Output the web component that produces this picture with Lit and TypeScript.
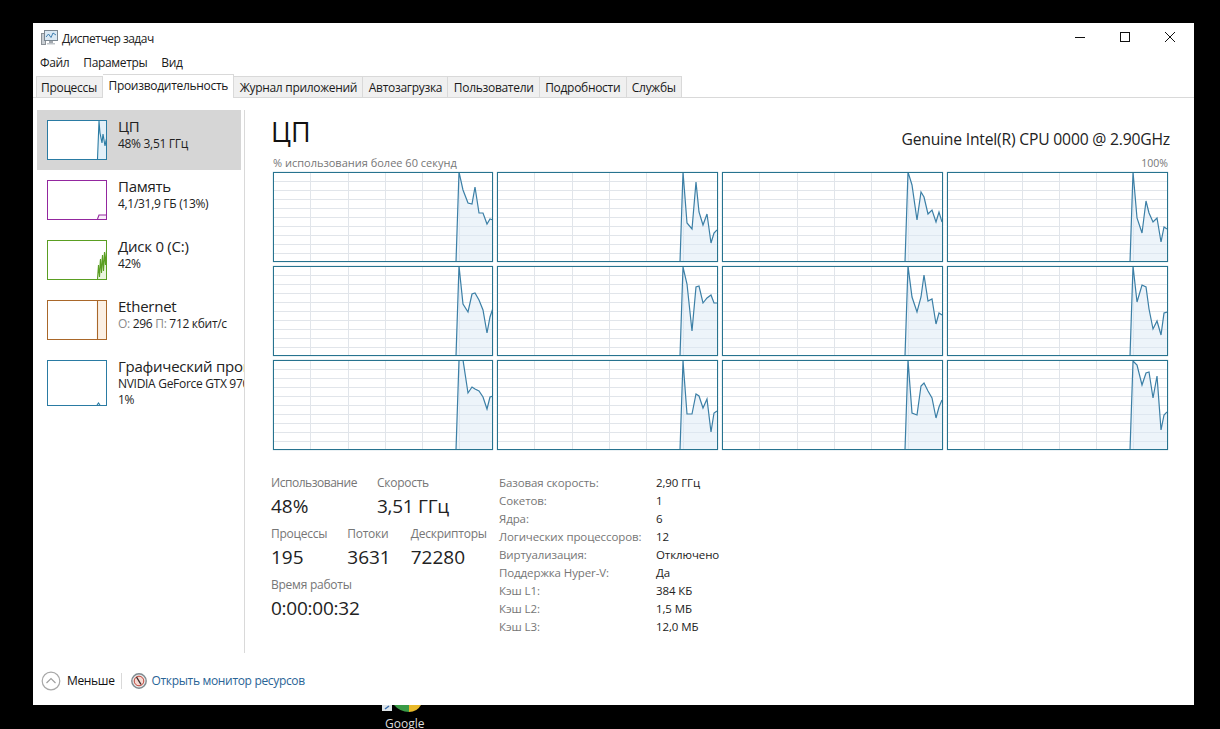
import { LitElement, html, css, svg } from "lit";
import { customElement } from "lit/decorators.js";

type Pt = [number, number];
const XS = [183, 186, 190, 195, 199, 202, 206, 210, 214, 217, 220];
const CHARTS: number[][] = [
  [90, 0, 18, 31, 32, 15, 41, 41, 52, 47, 48],
  [90, 0, 51, 57, 10, 40, 53, 42, 71, 61, 58],
  [90, 0, 13, 48, 20, 25, 42, 38, 50, 40, 50],
  [90, 0, 46, 61, 29, 41, 50, 46, 70, 55, 57],
  [90, 0, 38, 46, 28, 27, 34, 44, 67, 51, 42],
  [90, 1, 18, 65, 21, 20, 37, 32, 29, 37, 37],
  [90, 0, 31, 46, 31, 9, 35, 33, 58, 47, 49],
  [90, 0, 36, 19, 21, 43, 63, 55, 69, 47, 46],
  [90, 0, 0, 33, 27, 29, 31, 37, 49, 37, 36],
  [90, 1, 54, 54, 34, 36, 48, 39, 72, 53, 51],
  [90, 0, 53, 55, 26, 23, 31, 38, 58, 47, 40],
  [90, 1, 5, 25, 13, 12, 38, 16, 70, 55, 52],
];
const H_LINES = [9, 18, 27, 36, 45, 54, 63, 72, 81];
const V_LINES = [37, 75, 112, 149, 186];

const pts = (p: Pt[]) => p.map((q) => q.join(",")).join(" ");

function coreChart(ys: number[]) {
  const line: Pt[] = ys.map((y, i) => [XS[i], y]);
  const area: Pt[] = [...line, [220, 90]];
  return svg`<svg class="core-svg" viewBox="1 1 218.75 88" preserveAspectRatio="none">
    ${V_LINES.map((x) => svg`<line x1=${x + 0.5} x2=${x + 0.5} y1="0" y2="90" stroke="#e1e5ea"/>`)}
    ${H_LINES.map((y) => svg`<line x1="0" x2="220" y1=${y + 0.5} y2=${y + 0.5} stroke="#e1e5ea"/>`)}
    <polygon points=${pts(area)} fill="#dce9f5" fill-opacity="0.5"/>
    <polyline points=${pts(line)} fill="none" stroke="#3b7fa6" stroke-width="1.2"/>
  </svg>`;
}

interface Item {
  name: string;
  sub: unknown;
  third?: string;
  kind: string;
  stroke: string;
  fill: string;
  line?: Pt[];
  area?: Pt[];
}

const ITEMS: Item[] = [
  {
    name: "ЦП", sub: "48%  3,51 ГГц", kind: "cpu", stroke: "#2a7ba3", fill: "#e3f0f8",
    area: [[49.5, 38], [51, 0], [60, 0], [60, 38]],
    line: [[49.5, 38], [51, 0], [52, 12], [54, 22], [55, 13], [57, 25], [58, 20], [60, 26]],
  },
  {
    name: "Память", sub: "4,1/31,9 ГБ (13%)", kind: "mem", stroke: "#93279f", fill: "#f8f0f9",
    area: [[49.5, 38], [51, 34], [60, 34], [60, 38]],
    line: [[49.5, 38], [51, 34], [60, 34]],
  },
  {
    name: "Диск 0 (C:)", sub: "42%", kind: "disk", stroke: "#5a9e22", fill: "#eaf5df",
    area: [[49.5, 38], [51, 20], [54, 16], [56, 13], [58, 12], [60, 11], [60, 38]],
    line: [[49.5, 38], [50.5, 24], [51.5, 36], [52.5, 18], [53.5, 32], [54.5, 14], [55.5, 30], [56.5, 11], [57.5, 24], [58.5, 9], [59, 20], [60, 12]],
  },
  {
    name: "Ethernet",
    sub: html`<span class="dim">О:</span> 296 <span class="dim">П:</span> 712 кбит/с`,
    kind: "net", stroke: "#a9672a", fill: "#fbf0e4",
    area: [[49.5, 0], [60, 0], [60, 38], [49.5, 38]],
    line: [[49.5, 0], [49.5, 38]],
  },
  {
    name: "Графический процессор 0", sub: "NVIDIA GeForce GTX 970", third: "1%", kind: "gpu", stroke: "#2a7ba3", fill: "#e3f0f8",
    area: [[49, 44], [50.5, 42], [52, 44]],
    line: [[49, 44], [50.5, 42], [52, 44]],
  },
];

const TABS = ["Процессы", "Производительность", "Журнал приложений", "Автозагрузка", "Пользователи", "Подробности", "Службы"];
const INFO: [string, string][] = [
  ["Базовая скорость:", "2,90 ГГц"],
  ["Сокетов:", "1"],
  ["Ядра:", "6"],
  ["Логических процессоров:", "12"],
  ["Виртуализация:", "Отключено"],
  ["Поддержка Hyper-V:", "Да"],
  ["Кэш L1:", "384 КБ"],
  ["Кэш L2:", "1,5 МБ"],
  ["Кэш L3:", "12,0 МБ"],
];

@customElement("app-root")
export class AppRoot extends LitElement {
  static styles = css`
    :host {
      display: block;
      width: 1220px;
      height: 729px;
      overflow: hidden;
      background: #000;
      font-family: "Open Sans", "Noto Sans", sans-serif;
      color: #1a1a1a;
      font-size: 12px;
      letter-spacing: -0.25px;
    }
    .stage { padding: 23px 26px 0 33px; }
    .window {
      height: 682px;
      background: #fff;
      display: flex;
      flex-direction: column;
    }
    .title {
      height: 27px;
      display: flex;
      align-items: center;
      padding: 3px 2px 0 8px;
      box-sizing: border-box;
      gap: 4px;
    }
    .title .label { flex: 1; font-size: 12px; color: #222; letter-spacing: -0.5px; }
    .winbtns { display: flex; margin-top: -2px; }
    .winbtn { width: 45px; height: 24px; display: flex; align-items: center; justify-content: center; }
    .menu { height: 25px; display: flex; align-items: center; padding: 0 0 0 7px; gap: 14px; font-size: 12px; box-sizing: border-box; letter-spacing: -0.35px; }
    .tabs {
      height: 23px;
      box-sizing: border-box;
      display: flex;
      padding-left: 3px;
      border-bottom: 1px solid #d9d9d9;
      align-items: flex-end;
    }
    .tab {
      height: 21px;
      line-height: 22px;
      box-sizing: border-box;
      padding: 0 5.3px;
      background: #f0f0f0;
      border: 1px solid #d9d9d9;
      border-left: 0;
      border-bottom: 0;
      font-size: 12px;
      white-space: nowrap;
      letter-spacing: -0.3px;
    }
    .tab:first-child { border-left: 1px solid #d9d9d9; padding-left: 4px; }
    .tab.on {
      height: 24px;
      line-height: 22px;
      background: #fff;
      margin-bottom: -1px;
      padding-bottom: 3px;
    }
    .body { flex: 1; display: flex; padding: 12px 0 4px; min-height: 0; }
    .side {
      width: 212px;
      box-sizing: border-box;
      padding-left: 4px;
      border-right: 1px solid #d9d9d9;
      overflow: hidden;
      flex: none;
    }
    .item {
      width: 204px;
      height: 60px;
      box-sizing: border-box;
      padding: 10px 0 0 10px;
      display: flex;
      gap: 11px;
      white-space: nowrap;
    }
    .item.on { background: #d6d6d6; }
    .item.tall { height: 66px; }
    .thumb { width: 60px; height: 40px; flex: none; box-sizing: border-box; border: 1px solid; background: #fff; }
    .item.tall .thumb { height: 46px; }
    .thumb svg { display: block; width: 58px; height: 100%; }
    .cpu { border-color: #2a7ba3; }
    .mem { border-color: #93279f; }
    .disk { border-color: #5a9e22; }
    .net { border-color: #a9672a; }
    .gpu { border-color: #2a7ba3; }
    .item-name { font-size: 15px; line-height: 18px; margin-top: -3px; margin-bottom: 1px; color: #222; }
    .item-sub { font-size: 12px; line-height: 16px; color: #222; letter-spacing: -0.3px; }
    .dim { color: #8a8a8a; }
    .main { flex: 1; padding: 0 24px 0 26px; min-width: 0; }
    .head { height: 46px; display: flex; justify-content: space-between; align-items: flex-end; }
    .head h1 { margin: 0; font-weight: 400; font-size: 27px; line-height: 44px; color: #111; height: 46px; letter-spacing: 0; }
    .head .model { font-size: 15.7px; line-height: 20px; padding-bottom: 7px; color: #222; letter-spacing: -0.2px; }
    .graph-caption {
      height: 16px;
      display: flex;
      justify-content: space-between;
      font-size: 11px;
      line-height: 14px;
      color: #767676;
      padding: 0 2px;
      letter-spacing: 0;
    }
    .graph-caption span:last-child { font-size: 10.5px; }
    .cores {
      margin-left: 1.6px;
      margin-right: 2.4px;
      display: grid;
      grid-template-columns: repeat(4, 1fr);
      grid-auto-rows: 90px;
      gap: 4px;
    }
    .core { border: 1px solid #27738f; box-sizing: border-box; background: #fff; overflow: hidden; box-shadow: 0 0 1px rgba(39, 115, 143, 0.55); }
    .core-svg { display: block; width: 100%; height: 100%; }
    .stats { margin-top: 24px; display: flex; }
    .left { width: 228px; flex: none; }
    .stat-row { display: flex; gap: 20px; margin-bottom: 6px; white-space: nowrap; }
    .stat-label { font-size: 12px; line-height: 18px; color: #767676; }
    .stat-label.tight { letter-spacing: -0.47px; }
    .stat-value { font-size: 19px; line-height: 26px; margin-top: 1px; color: #222; letter-spacing: 0; }
    .stat-value.narrow { letter-spacing: -0.25px; }
    .info { display: grid; grid-template-columns: 157px auto; grid-auto-rows: 18px; line-height: 18px; white-space: nowrap; font-size: 11.5px; letter-spacing: -0.1px; }
    .info .k { color: #767676; }
    .info .v { color: #222; }
    .foot { height: 48px; display: flex; align-items: center; padding-left: 8px; flex: none; font-size: 12px; }
    .less { margin-left: 6px; color: #111; padding-bottom: 2px; letter-spacing: -0.35px; }
    .sep { width: 1px; height: 16px; background: #d9d9d9; margin: 0 9px 0 6px; }
    .link { color: #2a6496; margin-left: 5px; padding-bottom: 2px; letter-spacing: -0.33px; }
    .desk { height: 24px; padding-left: 349px; color: #ddd; }
    .desk svg { display: block; }
    .desk .g { line-height: 14px; margin-top: 5px; padding-left: 3px; font-size: 12px; letter-spacing: 0; }
  `;

  private thumb(i: Item) {
    const h = i.kind === "gpu" ? 44 : 38;
    return html`<div class="thumb ${i.kind}">
      <svg viewBox="0 0 58 ${h}" preserveAspectRatio="none">
        ${i.area ? svg`<polygon points=${pts(i.area)} fill=${i.fill}/>` : ""}
        ${i.line ? svg`<polyline points=${pts(i.line)} fill="none" stroke=${i.stroke} stroke-width="1.1"/>` : ""}
      </svg>
    </div>`;
  }

  render() {
    return html`
      <div class="stage">
        <div class="window">
          <div class="title">
            <svg width="17" height="16" viewBox="0 0 17 16">
              <rect x="0.5" y="3.5" width="4" height="11" fill="#c9ced3" stroke="#8b9197"/>
              <rect x="3.5" y="0.5" width="13" height="10" fill="#dbe9f4" stroke="#7b8791"/>
              <polyline points="5,7 7.5,4 10,7.5 12,3 15,5" fill="none" stroke="#3f7fb0" stroke-width="1"/>
              <rect x="8" y="11" width="4" height="2" fill="#a2a8ae"/>
              <rect x="6" y="13" width="8" height="1.5" fill="#c0c5ca"/>
            </svg>
            <span class="label">Диспетчер задач</span>
            <div class="winbtns">
              <div class="winbtn"><svg width="12" height="12" viewBox="0 0 12 12"><line x1="1" x2="11" y1="6.5" y2="6.5" stroke="#111"/></svg></div>
              <div class="winbtn"><svg width="12" height="12" viewBox="0 0 12 12"><rect x="1.5" y="1.5" width="9" height="9" fill="none" stroke="#111"/></svg></div>
              <div class="winbtn"><svg width="12" height="12" viewBox="0 0 12 12"><path d="M1 1 L11 11 M11 1 L1 11" stroke="#111" fill="none"/></svg></div>
            </div>
          </div>
          <div class="menu"><span>Файл</span><span>Параметры</span><span>Вид</span></div>
          <div class="tabs">
            ${TABS.map((t, i) => html`<div class="tab ${i === 1 ? "on" : ""}">${t}</div>`)}
          </div>
          <div class="body">
            <div class="side">
              ${ITEMS.map((it, i) => html`
                <div class="item ${i === 0 ? "on" : ""} ${it.third ? "tall" : ""}">
                  ${this.thumb(it)}
                  <div>
                    <div class="item-name">${it.name}</div>
                    <div class="item-sub">${it.sub}</div>
                    ${it.third ? html`<div class="item-sub">${it.third}</div>` : ""}
                  </div>
                </div>`)}
            </div>
            <div class="main">
              <div class="head">
                <h1>ЦП</h1>
                <div class="model">Genuine Intel(R) CPU 0000 @ 2.90GHz</div>
              </div>
              <div class="graph-caption"><span>% использования более 60 секунд</span><span>100%</span></div>
              <div class="cores">
                ${CHARTS.map((c) => html`<div class="core">${coreChart(c)}</div>`)}
              </div>
              <div class="stats">
                <div class="left">
                  <div class="stat-row">
                    <div><div class="stat-label tight">Использование</div><div class="stat-value">48%</div></div>
                    <div><div class="stat-label">Скорость</div><div class="stat-value narrow">3,51 ГГц</div></div>
                  </div>
                  <div class="stat-row">
                    <div><div class="stat-label">Процессы</div><div class="stat-value">195</div></div>
                    <div><div class="stat-label">Потоки</div><div class="stat-value">3631</div></div>
                    <div><div class="stat-label">Дескрипторы</div><div class="stat-value">72280</div></div>
                  </div>
                  <div class="stat-row">
                    <div><div class="stat-label">Время работы</div><div class="stat-value narrow">0:00:00:32</div></div>
                  </div>
                </div>
                <div class="info">
                  ${INFO.map(([k, v]) => html`<span class="k">${k}</span><span class="v">${v}</span>`)}
                </div>
              </div>
            </div>
          </div>
          <div class="foot">
            <svg width="20" height="20" viewBox="0 0 20 20">
              <circle cx="10" cy="10" r="8.8" fill="#fff" stroke="#a8a8a8" stroke-width="1.2"/>
              <polyline points="5.5,12 10,7.5 14.5,12" fill="none" stroke="#a0a0a0" stroke-width="1.2"/>
            </svg>
            <span class="less">Меньше</span>
            <span class="sep"></span>
            <svg width="16" height="16" viewBox="0 0 16 16">
              <circle cx="8" cy="8" r="7.2" fill="#e9e9e9" stroke="#7f8a8f" stroke-width="1.4"/>
              <circle cx="8" cy="8" r="4.8" fill="#f6d9d2" stroke="#c0453a" stroke-width="1"/>
              <line x1="5.5" y1="4" x2="10" y2="11.5" stroke="#3a2a2a" stroke-width="1.4"/>
            </svg>
            <span class="link">Открыть монитор ресурсов</span>
          </div>
        </div>
        <div class="desk">
          <svg width="42" height="7" viewBox="0 0 42 7">
            <rect x="0" y="0" width="10" height="6" fill="#dfe6ea"/>
            <path d="M3 4 L7 1" stroke="#3a6fb0" stroke-width="1.5"/>
            <path d="M12 0 Q18 7 27 7 L27 0 Z" fill="#3a9a46"/>
            <path d="M27 7 Q35 7 39 0 L27 0 Z" fill="#e8b92a"/>
          </svg>
          <div class="g">Google</div>
        </div>
      </div>
    `;
  }
}
